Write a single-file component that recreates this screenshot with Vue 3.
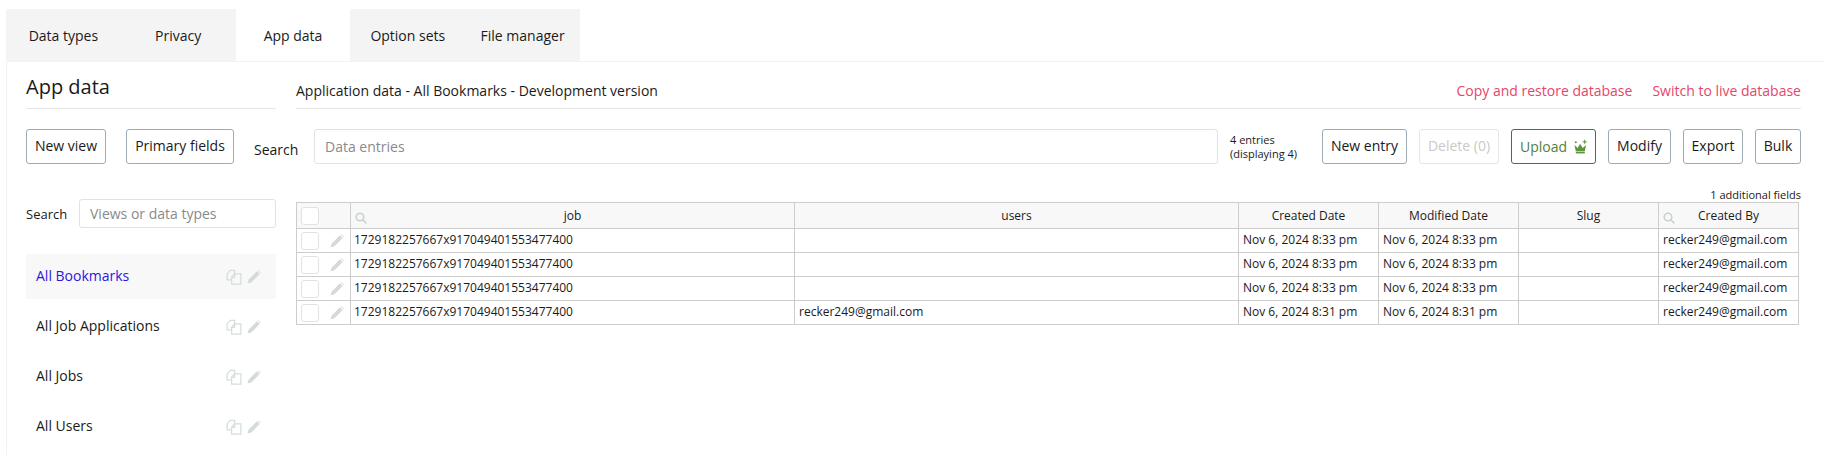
<template>
  <div class="page">
    <div class="tabs">
      <div v-for="t in tabs" :key="t" class="tab" :class="{ active: t === 'App data' }">{{ t }}</div>
    </div>
    <div class="panel">
      <div class="sidebar">
        <div class="heading">App data</div>
        <div class="side-buttons">
          <button class="btn w-view">New view</button>
          <button class="btn w-primary">Primary fields</button>
        </div>
        <div class="side-search">
          <span class="side-label">Search</span>
          <div class="input side-input">Views or data types</div>
        </div>
        <div class="views">
          <div v-for="(v, i) in views" :key="v" class="view" :class="{ selected: i === 0 }">
            <span class="view-name">{{ v }}</span>
            <svg class="copy-icon" width="16" height="16" viewBox="0 0 17 17" fill="none" stroke="#d6dcdc" stroke-width="1.3">
              <path d="M6 11.5H1.2V5.2L4.6 1.5H9.2V5" />
              <path d="M6 16V8.6L9 5.2H15.8V16Z" />
              <path d="M6 8.8H9.2V5.4" />
            </svg>
            <svg class="pencil" width="14" height="14" viewBox="0 0 15 15"><path d="M0.5 14.5L1.6 10.4L10.6 1.4L13.6 4.4L4.6 13.4Z" fill="#d4dada" /><path d="M11.4 0.6L12.2 0.2L14.8 2.8L14.4 3.6Z" fill="#d4dada" /></svg>
          </div>
        </div>
      </div>
      <div class="main">
        <div class="title-row">
          <span class="title">Application data - All Bookmarks - Development version</span>
          <span class="links">
            <span>Copy and restore database</span>
            <span>Switch to live database</span>
          </span>
        </div>
        <div class="toolbar">
          <span class="main-label">Search</span>
          <div class="input main-input">Data entries</div>
          <div class="entries">4 entries<br />(displaying 4)</div>
          <button class="btn w-new">New entry</button>
          <button class="btn w-delete disabled">Delete (0)</button>
          <button class="btn w-upload upload">
            Upload
            <svg width="15" height="15" viewBox="0 0 16 16" fill="#5f9440">
              <path d="M1.5 6.5L5 9.5L7.6 5L10.4 9.5L14 6.5L12.6 13H3Z" />
              <rect x="3" y="13.6" width="9.6" height="1.8" />
              <path d="M12.5 0L13.2 2.3L15.5 3L13.2 3.7L12.5 6L11.8 3.7L9.5 3L11.8 2.3Z" />
              <circle cx="3" cy="3.5" r="1.1" />
            </svg>
          </button>
          <button class="btn w-modify">Modify</button>
          <button class="btn w-export">Export</button>
          <button class="btn w-bulk">Bulk</button>
        </div>
        <div class="additional">1 additional fields</div>
        <table class="grid">
          <colgroup>
            <col v-for="(w, i) in colWidths" :key="i" :style="{ width: w + 'px' }" />
          </colgroup>
          <thead>
            <tr>
              <th class="check-cell"><span class="box"></span></th>
              <th class="search-th">
                <svg class="mag" width="12" height="12" viewBox="0 0 12 12" fill="none" stroke="#c8d0d0" stroke-width="1.6"><circle cx="5" cy="5" r="3.8" /><path d="M7.8 7.8L11.4 11.4" /></svg>
                job
              </th>
              <th>users</th>
              <th>Created Date</th>
              <th>Modified Date</th>
              <th>Slug</th>
              <th class="search-th">
                <svg class="mag" width="12" height="12" viewBox="0 0 12 12" fill="none" stroke="#c8d0d0" stroke-width="1.6"><circle cx="5" cy="5" r="3.8" /><path d="M7.8 7.8L11.4 11.4" /></svg>
                Created By
              </th>
            </tr>
          </thead>
          <tbody>
            <tr v-for="(r, i) in rows" :key="i">
              <td class="check-cell">
                <span class="box"></span>
                <svg class="row-pencil" width="14" height="14" viewBox="0 0 15 15"><path d="M0.5 14.5L1.6 10.4L10.6 1.4L13.6 4.4L4.6 13.4Z" fill="#d4dada" /><path d="M11.4 0.6L12.2 0.2L14.8 2.8L14.4 3.6Z" fill="#d4dada" /></svg>
              </td>
              <td>{{ r.job }}</td>
              <td>{{ r.users }}</td>
              <td>{{ r.date }}</td>
              <td>{{ r.date }}</td>
              <td></td>
              <td>{{ r.by }}</td>
            </tr>
          </tbody>
        </table>
      </div>
    </div>
  </div>
</template>

<script setup>
const tabs = ['Data types', 'Privacy', 'App data', 'Option sets', 'File manager']
const views = ['All Bookmarks', 'All Job Applications', 'All Jobs', 'All Users']
const colWidths = [54, 444, 444, 140, 140, 140, 140]

const job = '1729182257667x917049401553477400'
const by = 'recker249@gmail.com'
const rows = [
  { job, users: '', date: 'Nov 6, 2024 8:33 pm', by },
  { job, users: '', date: 'Nov 6, 2024 8:33 pm', by },
  { job, users: '', date: 'Nov 6, 2024 8:33 pm', by },
  { job, users: by, date: 'Nov 6, 2024 8:31 pm', by }
]
</script>

<style>
html,
body {
  margin: 0;
  background: #fff;
  overflow: hidden;
}
</style>

<style scoped>
.page {
  width: 1825px;
  height: 455px;
  box-sizing: border-box;
  padding: 9px 0 0 6px;
  font-family: 'Open Sans', sans-serif;
  font-size: 14px;
  color: #1a1a1a;
  overflow: hidden;
}

.tabs {
  display: flex;
  width: 574px;
  height: 52px;
}

.tab {
  flex: 1;
  display: flex;
  align-items: center;
  justify-content: center;
  padding-top: 1px;
  box-sizing: border-box;
  background: #f4f4f4;
}

.tab.active {
  background: #fff;
}

.panel {
  display: flex;
  border-top: 1px solid #f2f2f2;
  border-left: 1px solid #f2f2f2;
  height: 400px;
}

.sidebar {
  width: 250px;
  margin-left: 19px;
  flex-shrink: 0;
}

.heading {
  height: 47px;
  box-sizing: border-box;
  border-bottom: 1px solid #e6e6e6;
  font-size: 20px;
  line-height: 50px;
}

.side-buttons {
  display: flex;
  gap: 20px;
  margin-top: 20px;
}

.btn {
  height: 35px;
  padding: 0 0 3px;
  box-sizing: border-box;
  background: #fff;
  border: 1px solid #9eabb3;
  border-radius: 3px;
  font-family: inherit;
  font-size: 14px;
  color: #1a1a1a;
  white-space: nowrap;
  flex-shrink: 0;
}

.w-view { width: 80px; }
.w-primary { width: 108px; }
.w-new { width: 85px; }
.w-delete { width: 80px; }
.w-upload { width: 85px; }
.w-modify { width: 63px; }
.w-export { width: 60px; }
.w-bulk { width: 46px; }

.btn.disabled {
  border-color: #e6e6e6;
  color: #c9c9c9;
}

.btn.upload {
  display: flex;
  align-items: center;
  gap: 6px;
  padding: 0 0 0 8px;
  border-color: #4a7236;
  color: #54803c;
}

.side-search {
  display: flex;
  align-items: center;
  margin-top: 35px;
}

.side-label {
  width: 40px;
  font-size: 13px;
  white-space: nowrap;
}

.input {
  display: flex;
  align-items: center;
  box-sizing: border-box;
  border: 1px solid #e2e2e2;
  border-radius: 3px;
  color: #8a8a8a;
}

.side-input {
  width: 197px;
  height: 29px;
  margin-left: 13px;
  padding-left: 10px;
}

.views {
  margin-top: 26px;
}

.view {
  display: flex;
  align-items: center;
  height: 45px;
  margin-bottom: 5px;
  padding-left: 10px;
}

.view.selected {
  background: #f8f8f8;
}

.view.selected .view-name {
  color: #2d16e0;
}

.view-name {
  flex: 1;
  padding-bottom: 2px;
}

.copy-icon {
  margin-right: 5px;
}

.pencil {
  margin-right: 15px;
}

.main {
  width: 1505px;
  margin-left: 20px;
  flex-shrink: 0;
}

.title-row {
  display: flex;
  justify-content: space-between;
  align-items: center;
  height: 47px;
  padding-top: 11px;
  box-sizing: border-box;
  border-bottom: 1px solid #e6e6e6;
}

.links {
  display: flex;
  gap: 20px;
  color: #e5466a;
}

.toolbar {
  display: flex;
  align-items: center;
  gap: 12px;
  margin-top: 20px;
  margin-left: -42px;
}

.main-label {
  width: 44px;
  margin-top: 6px;
  margin-right: 4px;
}

.main-input {
  flex: 1;
  height: 35px;
  padding-left: 10px;
}

.entries {
  font-size: 11px;
  line-height: 14px;
  width: 80px;
  flex-shrink: 0;
}

.additional {
  height: 38px;
  line-height: 16px;
  box-sizing: border-box;
  padding-top: 23px;
  text-align: right;
  font-size: 11px;
}

.grid {
  width: 1502px;
  table-layout: fixed;
  border-collapse: collapse;
  font-size: 12px;
}

.grid th,
.grid td {
  border: 1px solid #cdcdcd;
  padding: 0 3px;
  height: 24px;
  box-sizing: border-box;
  white-space: nowrap;
  overflow: hidden;
}

.grid td {
  padding-bottom: 2px;
}

.grid td + td + td {
  padding-left: 4px;
}

.grid th {
  height: 26px;
  background: #f8f8f8;
  font-weight: 400;
  text-align: center;
  position: relative;
}

.check-cell {
  padding: 0 !important;
}

.box {
  display: block;
  width: 18px;
  height: 18px;
  margin-left: 4px;
  box-sizing: border-box;
  border: 1px solid #e2e2e2;
  border-radius: 3px;
  background: #fff;
}

.grid td.check-cell {
  position: relative;
}

.row-pencil {
  position: absolute;
  left: 33px;
  top: 5px;
}

.mag {
  position: absolute;
  left: 4px;
  top: 9px;
}
</style>
